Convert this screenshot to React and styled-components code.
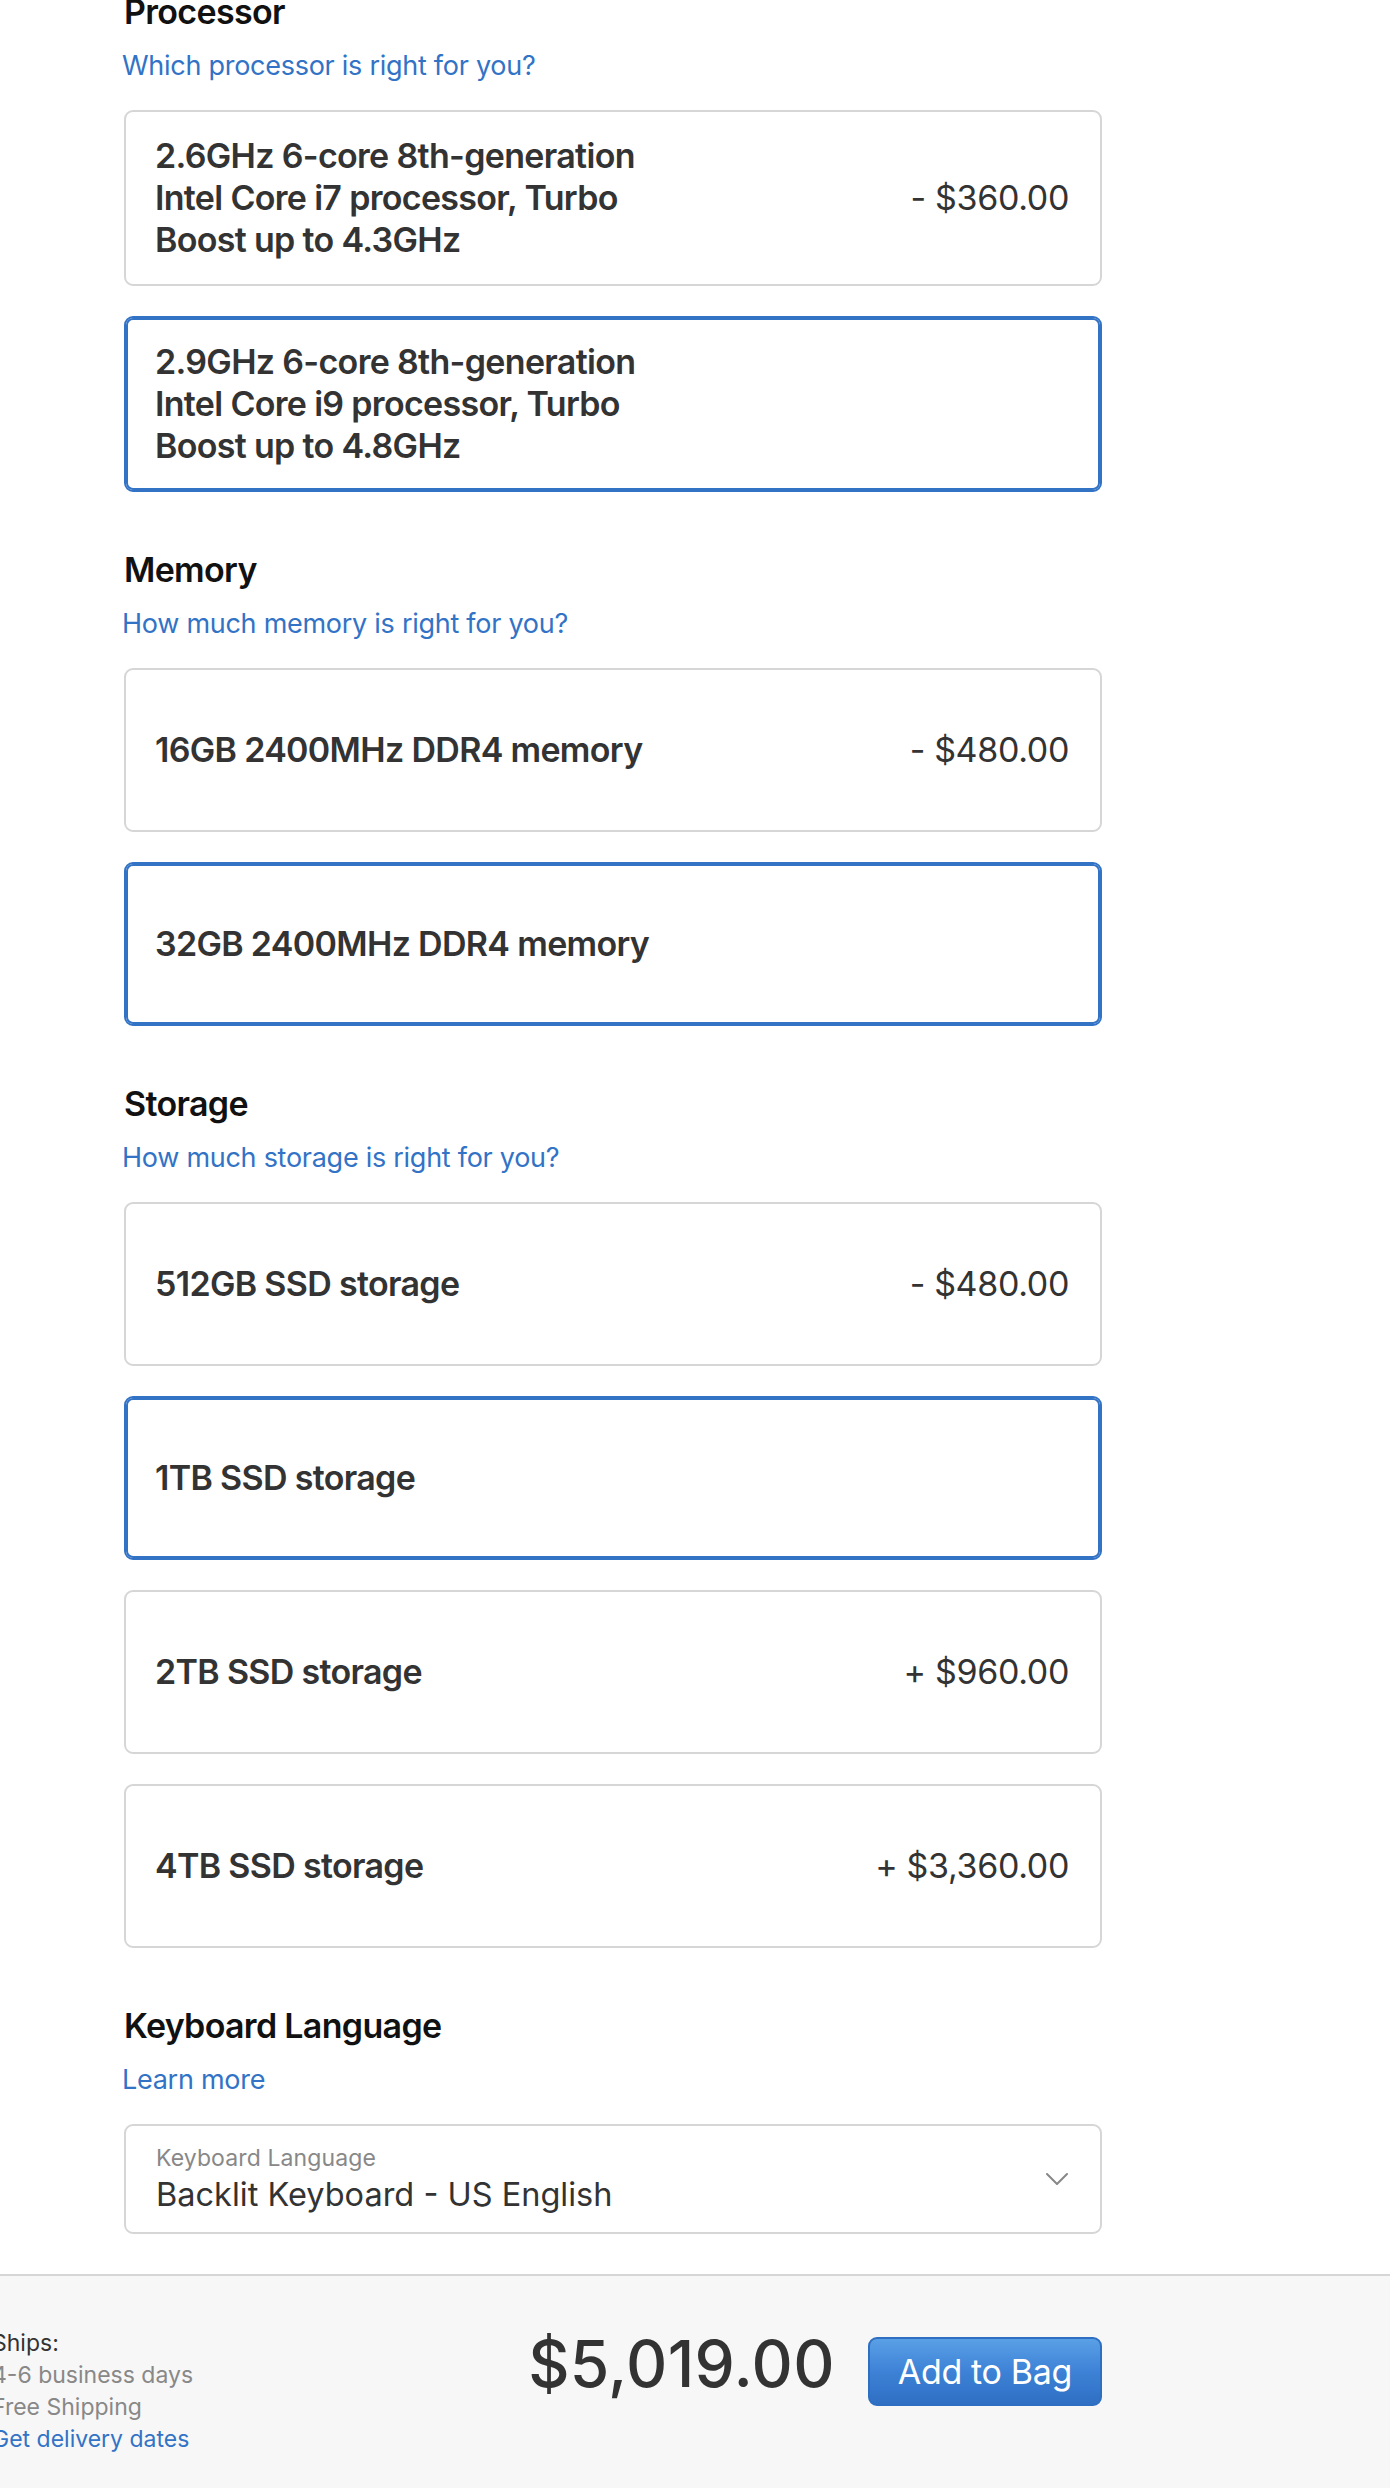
import React from "react";
import styled, { createGlobalStyle, css } from "styled-components";

const GlobalStyle = createGlobalStyle`
  html, body {
    margin: 0;
    padding: 0;
    background: #ffffff;
  }
  body {
    font-family: "Inter", "Noto Sans", "Liberation Sans", sans-serif;
    color: #333333;
    -webkit-font-smoothing: antialiased;
  }
  * { box-sizing: border-box; }
`;

const BLUE = "#3273c6";

const Page = styled.div`
  width: 1390px;
  overflow: hidden;
`;

const Main = styled.main`
  width: 978px;
  margin-left: 124px;
  padding-bottom: 40px;
`;

const Section = styled.section`
  display: flex;
  flex-direction: column;
  margin-top: ${(p) => (p.$first ? "-9px" : "57px")};
`;

const SectionTitle = styled.h2`
  margin: 0;
  font-size: 34px;
  line-height: 42px;
  font-weight: 600;
  color: #111111;
  letter-spacing: -0.02em;
`;

const HelpLink = styled.a`
  display: block;
  margin: 15px 0 26px -2px;
  font-size: 27px;
  line-height: 36px;
  color: ${BLUE};
  text-decoration: none;
  letter-spacing: -0.01em;
  cursor: pointer;
`;

const OptionList = styled.div`
  display: flex;
  flex-direction: column;
  gap: 30px;
`;

const OptionCard = styled.div`
  display: flex;
  align-items: center;
  justify-content: space-between;
  min-height: 164px;
  padding: 23px 31px 23px 29px;
  border: 2px solid #d6d6d6;
  border-radius: 9px;
  background: #ffffff;
  cursor: pointer;
  ${(p) =>
    p.$selected &&
    css`
      border-color: ${BLUE};
      box-shadow: inset 0 0 0 2px ${BLUE};
    `}
`;

const OptionName = styled.span`
  max-width: 530px;
  font-size: 34px;
  line-height: 42px;
  font-weight: 600;
  color: #333333;
  letter-spacing: -0.02em;
`;

const OptionPrice = styled.span`
  font-size: 34px;
  line-height: 42px;
  font-weight: 400;
  color: #333333;
  white-space: nowrap;
  letter-spacing: -0.01em;
`;

const SelectField = styled.div`
  position: relative;
  display: flex;
  flex-direction: column;
  justify-content: center;
  height: 110px;
  padding: 6px 32px 0 30px;
  border: 2px solid #d6d6d6;
  border-radius: 9px;
  background: #ffffff;
  cursor: pointer;
`;

const SelectLabel = styled.span`
  font-size: 23px;
  line-height: 26px;
  color: #888888;
  letter-spacing: 0.005em;
  margin-top: -4px;
`;

const SelectValue = styled.span`
  margin-top: 4px;
  font-size: 32.5px;
  line-height: 40px;
  color: #333333;
  letter-spacing: 0;
`;

const Chevron = styled.svg`
  position: absolute;
  right: 32px;
  top: 50%;
  width: 22px;
  height: 12px;
  margin-top: -6px;
`;

const Footer = styled.footer`
  min-height: 214px;
  border-top: 2px solid #d6d6d6;
  background: #f7f7f7;
  padding-top: 51px;
`;

const FooterInner = styled.div`
  display: flex;
  justify-content: space-between;
  align-items: flex-start;
  width: 1110px;
  margin-left: -8px;
`;

const ShipInfo = styled.div`
  display: flex;
  flex-direction: column;
  font-size: 23px;
  line-height: 32px;
  letter-spacing: 0;
`;

const ShipLine = styled.span`
  color: ${(p) => (p.$muted ? "#888888" : "#333333")};
`;

const ShipLink = styled.a`
  color: ${BLUE};
  text-decoration: none;
  cursor: pointer;
`;

const Purchase = styled.div`
  display: flex;
  align-items: flex-start;
  gap: 33px;
  margin-top: 5px;
`;

const TotalPrice = styled.span`
  font-size: 64px;
  line-height: 64px;
  font-weight: 500;
  color: #333333;
  letter-spacing: 0.005em;
`;

const AddButton = styled.button`
  margin-top: 5px;
  height: 69px;
  padding: 0 28px;
  border: 2px solid #2f6fc2;
  border-radius: 9px;
  background: linear-gradient(to bottom, #5aa0e6 0%, #3d82d6 50%, #2f6fc4 100%);
  color: #ffffff;
  font-family: inherit;
  font-size: 34px;
  font-weight: 400;
  letter-spacing: -0.01em;
  cursor: pointer;
`;

const sections = [
  {
    title: "Processor",
    link: "Which processor is right for you?",
    options: [
      {
        name: "2.6GHz 6-core 8th-generation Intel Core i7 processor, Turbo Boost up to 4.3GHz",
        price: "- $360.00",
      },
      {
        name: "2.9GHz 6-core 8th-generation Intel Core i9 processor, Turbo Boost up to 4.8GHz",
        selected: true,
      },
    ],
  },
  {
    title: "Memory",
    link: "How much memory is right for you?",
    options: [
      { name: "16GB 2400MHz DDR4 memory", price: "- $480.00" },
      { name: "32GB 2400MHz DDR4 memory", selected: true },
    ],
  },
  {
    title: "Storage",
    link: "How much storage is right for you?",
    options: [
      { name: "512GB SSD storage", price: "- $480.00" },
      { name: "1TB SSD storage", selected: true },
      { name: "2TB SSD storage", price: "+ $960.00" },
      { name: "4TB SSD storage", price: "+ $3,360.00" },
    ],
  },
];

export default function App() {
  return (
    <Page>
      <GlobalStyle />
      <Main>
        {sections.map((s, i) => (
          <Section key={s.title} $first={i === 0}>
            <SectionTitle>{s.title}</SectionTitle>
            <HelpLink>{s.link}</HelpLink>
            <OptionList>
              {s.options.map((o) => (
                <OptionCard key={o.name} $selected={o.selected}>
                  <OptionName>{o.name}</OptionName>
                  {o.price && <OptionPrice>{o.price}</OptionPrice>}
                </OptionCard>
              ))}
            </OptionList>
          </Section>
        ))}
        <Section>
          <SectionTitle>Keyboard Language</SectionTitle>
          <HelpLink>Learn more</HelpLink>
          <SelectField>
            <SelectLabel>Keyboard Language</SelectLabel>
            <SelectValue>Backlit Keyboard - US English</SelectValue>
            <Chevron viewBox="0 0 22 12" fill="none">
              <polyline
                points="1,1 11,11 21,1"
                stroke="#888888"
                strokeWidth="2"
                strokeLinecap="round"
                strokeLinejoin="round"
              />
            </Chevron>
          </SelectField>
        </Section>
      </Main>
      <Footer>
        <FooterInner>
          <ShipInfo>
            <ShipLine>Ships:</ShipLine>
            <ShipLine $muted>4-6 business days</ShipLine>
            <ShipLine $muted>Free Shipping</ShipLine>
            <ShipLink>Get delivery dates</ShipLink>
          </ShipInfo>
          <Purchase>
            <TotalPrice>$5,019.00</TotalPrice>
            <AddButton>Add to Bag</AddButton>
          </Purchase>
        </FooterInner>
      </Footer>
    </Page>
  );
}
